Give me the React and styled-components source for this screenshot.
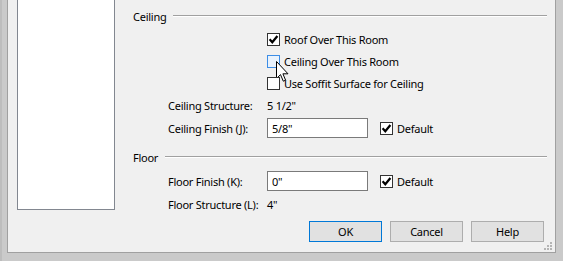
import React from 'react';
import styled, { createGlobalStyle } from 'styled-components';

const GlobalStyle = createGlobalStyle`
  html, body {
    margin: 0;
    padding: 0;
    background: #c9c9c9;
  }
  body {
    font-family: "Noto Sans", "Open Sans", sans-serif;
    font-size: 11px;
    letter-spacing: -0.25px;
    color: #000;
  }
`;

const Window = styled.div`
  width: 563px;
  height: 261px;
  box-sizing: border-box;
  padding: 0 7px 8px 7px;
  background: #cacaca;
  box-shadow: inset 2px 0 0 #bdbdbd;
  overflow: hidden;
`;

const Dialog = styled.div`
  position: relative;
  height: 253px;
  box-sizing: border-box;
  border: 1px solid #a0a0a0;
  border-top: none;
  background: #f0f0f0;
  display: flex;
  flex-direction: column;
`;

const Main = styled.div`
  display: flex;
  align-items: flex-start;
`;

const SidePanel = styled.div`
  flex: none;
  width: 98px;
  height: 210px;
  margin-left: 9px;
  box-sizing: border-box;
  border: 1px solid #828790;
  border-top: none;
  background: #fff;
`;

const Content = styled.div`
  flex: 1;
  padding: 9px 8px 0 18px;
`;

const GroupHeader = styled.div`
  display: flex;
  align-items: flex-start;
  height: 16px;
  margin-top: ${p => p.$top || 0}px;
  margin-bottom: 3px;
`;

const GroupTitle = styled.span`
  line-height: 16px;
`;

const GroupLine = styled.div`
  flex: 1;
  margin: 6px 0 0 7px;
  border-top: 1px solid #a0a0a0;
  border-bottom: 1px solid #fff;
`;

const Row = styled.div`
  display: flex;
  align-items: center;
  height: ${p => p.$h}px;
  padding-left: ${p => (p.$inset ? 134 : 35)}px;
`;

const Label = styled.span`
  flex: none;
  width: 99px;
`;

const TextBox = styled.input`
  width: 101px;
  height: 20px;
  box-sizing: border-box;
  margin: 0 12px 0 0;
  padding: 0 4px;
  border: 1px solid #7a7a7a;
  background: #fff;
  font: inherit;
  letter-spacing: inherit;
  color: #000;
  outline: none;
`;

const CheckWrap = styled.label`
  display: flex;
  align-items: center;
`;

const Box = styled.span`
  position: relative;
  flex: none;
  width: 13px;
  height: 13px;
  box-sizing: border-box;
  border: 1px solid ${p => (p.$hover ? '#3c8de6' : '#333')};
  background: ${p => (p.$hover ? '#e8f2fd' : '#fff')};
  display: flex;
`;

const CheckText = styled.span`
  margin-left: 4px;
`;

const Cursor = styled.svg`
  position: absolute;
  left: 8px;
  top: 5px;
  overflow: visible;
`;

const Footer = styled.div`
  display: flex;
  justify-content: flex-end;
  gap: 8px;
  margin-top: 6px;
  padding-right: 11px;
`;

const Button = styled.button`
  width: 73px;
  height: 21px;
  box-sizing: border-box;
  padding: 0;
  border: 1px solid ${p => (p.$primary ? '#0078d7' : '#adadad')};
  background: #e1e1e1;
  font: inherit;
  letter-spacing: inherit;
  color: #000;
`;

const Grip = styled.svg`
  position: absolute;
  right: 2px;
  bottom: 1px;
`;

function Check({ checked, hover, children }) {
  return (
    <CheckWrap>
      <Box $hover={hover}>
        {checked && (
          <svg width="11" height="11" viewBox="0 0 11 11">
            <path d="M1.6 5.2 L4.3 8.2 L9.4 2" fill="none" stroke="#000" strokeWidth="2.2" />
          </svg>
        )}
        {hover && (
          <Cursor width="13" height="22" viewBox="0 0 13 22">
            <path
              d="M0.5 0.5 L0.5 17.5 L4.5 13.6 L7.3 20.2 L9.6 19.2 L6.9 12.8 L12 12.8 Z"
              fill="#fff"
              stroke="#000"
              strokeWidth="1"
            />
          </Cursor>
        )}
      </Box>
      {children && <CheckText>{children}</CheckText>}
    </CheckWrap>
  );
}

export default function App() {
  return (
    <>
      <GlobalStyle />
      <Window>
        <Dialog>
          <Main>
            <SidePanel />
            <Content>
              <GroupHeader>
                <GroupTitle>Ceiling</GroupTitle>
                <GroupLine />
              </GroupHeader>
              <Row $h={22} $inset>
                <Check checked>Roof Over This Room</Check>
              </Row>
              <Row $h={22} $inset>
                <Check hover>Ceiling Over This Room</Check>
              </Row>
              <Row $h={22} $inset>
                <Check>Use Soffit Surface for Ceiling</Check>
              </Row>
              <Row $h={22}>
                <Label>Ceiling Structure:</Label>
                <span>5 1/2"</span>
              </Row>
              <Row $h={24}>
                <Label>Ceiling Finish (J):</Label>
                <TextBox defaultValue={'5/8"'} />
                <Check checked>Default</Check>
              </Row>
              <GroupHeader $top={10}>
                <GroupTitle>Floor</GroupTitle>
                <GroupLine />
              </GroupHeader>
              <Row $h={24}>
                <Label>Floor Finish (K):</Label>
                <TextBox defaultValue={'0"'} />
                <Check checked>Default</Check>
              </Row>
              <Row $h={22}>
                <Label>Floor Structure (L):</Label>
                <span>4"</span>
              </Row>
            </Content>
          </Main>
          <Footer>
            <Button $primary>OK</Button>
            <Button>Cancel</Button>
            <Button>Help</Button>
          </Footer>
          <Grip width="9" height="9" viewBox="0 0 9 9">
            <rect x="6" y="0" width="2" height="2" fill="#b4b4b4" />
            <rect x="3" y="3" width="2" height="2" fill="#b4b4b4" />
            <rect x="6" y="3" width="2" height="2" fill="#b4b4b4" />
            <rect x="0" y="6" width="2" height="2" fill="#b4b4b4" />
            <rect x="3" y="6" width="2" height="2" fill="#b4b4b4" />
            <rect x="6" y="6" width="2" height="2" fill="#b4b4b4" />
          </Grip>
        </Dialog>
      </Window>
    </>
  );
}
